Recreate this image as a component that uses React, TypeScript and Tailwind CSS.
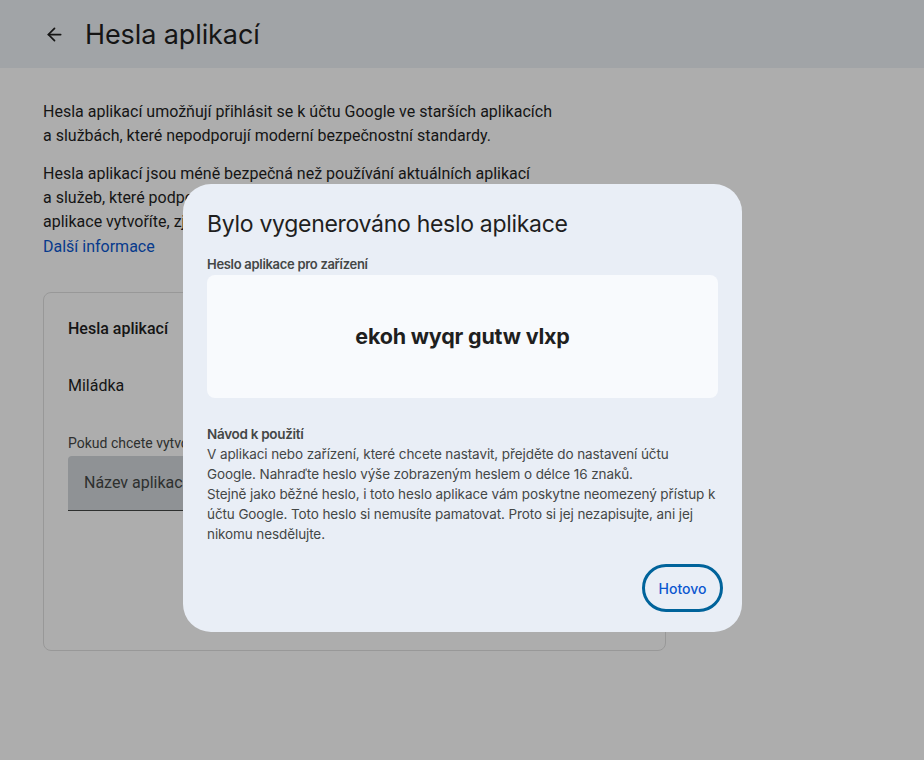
import { ArrowLeft } from "lucide-react";

const sans = { fontFamily: "Roboto, 'Liberation Sans', sans-serif" };
const display = { fontFamily: "Inter, 'Open Sans', sans-serif" };

function Page() {
  return (
    <div className="min-h-[760px] bg-white text-[#1f1f1f]" style={sans}>
      <header className="flex h-[68px] items-center gap-[20px] bg-[#eef2f6] pl-[44px]">
        <ArrowLeft className="h-[21px] w-[21px]" strokeWidth={2} />
        <h1 className="text-[27px] leading-none tracking-[-0.1px]" style={display}>
          Hesla aplikací
        </h1>
      </header>

      <main className="w-[666px] pl-[43px] pt-[32px]">
        <p className="w-[520px] text-[16px] leading-[24px]">
          Hesla aplikací umožňují přihlásit se k účtu Google ve starších aplikacích a službách, které
          nepodporují moderní bezpečnostní standardy.
        </p>
        <p className="mt-[14px] w-[496px] text-[16px] leading-[24px]">
          Hesla aplikací jsou méně bezpečná než používání aktuálních aplikací a služeb, které podporují
          moderní bezpečnostní standardy. Než hesla aplikace vytvoříte, zjistěte, zda je aplikace
          nepotřebuje.
        </p>
        <a className="block text-[16px] leading-[25px] text-[#0b57d0]">Další informace</a>

        <section className="mt-[33px] h-[359px] rounded-[8px] border border-[#e1e1e1] px-[24px] pt-[24px]">
          <h2 className="text-[16px] font-medium leading-[24px]">Hesla aplikací</h2>
          <p className="mt-[33px] text-[16px] leading-[24px]">Miládka</p>
          <p className="mt-[35px] whitespace-nowrap text-[14px] leading-[20px] text-[#444746]">
            Pokud chcete vytvořit nové heslo aplikace, zadejte níže její název.
          </p>
          <div className="mt-[3px] flex h-[55px] w-[400px] items-center rounded-t-[4px] border-b border-[#444746] bg-[#d3d7dc] px-[16px] text-[16px] text-[#444746]">
            Název aplikace
          </div>
        </section>
      </main>
    </div>
  );
}

function Dialog() {
  return (
    <div
      className="absolute left-[183px] top-[184px] w-[559px] rounded-[28px] bg-[#e9eef6] px-[24px] pb-[20px] pt-[25px] text-[#1f1f1f]"
      style={display}
    >
      <h2 className="text-[23px] font-normal leading-[30px] tracking-[-0.3px]">
        Bylo vygenerováno heslo aplikace
      </h2>
      <p className="mt-[16px] text-[13px] font-semibold leading-[18px] tracking-[-0.3px] text-[#444746]">
        Heslo aplikace pro zařízení
      </p>
      <div className="mt-[2px] flex h-[123px] items-center justify-center rounded-[8px] bg-[#f8fafd]">
        <span className="text-[21.5px] font-bold tracking-[-0.2px] text-[#1f1f1f]">
          ekoh wyqr gutw vlxp
        </span>
      </div>
      <div className="mt-[26px] text-[13.5px] leading-[20px] text-[#444746]">
        <p className="font-semibold tracking-[-0.3px]">Návod k použití</p>
        <p className="tracking-[-0.1px]">
          V aplikaci nebo zařízení, které chcete nastavit, přejděte do nastavení účtu Google. Nahraďte
          heslo výše zobrazeným heslem o délce 16 znaků.
          <br />
          Stejně jako běžné heslo, i toto heslo aplikace vám poskytne neomezený přístup k účtu Google.
          Toto heslo si nemusíte pamatovat. Proto si jej nezapisujte, ani jej nikomu nesdělujte.
        </p>
      </div>
      <div className="mt-[20px] flex justify-end">
        <button className="-mr-[5px] flex h-[48px] w-[81px] items-center justify-center rounded-full border-[3px] border-[#00639b] text-[14px] font-medium text-[#0b57d0]">
          Hotovo
        </button>
      </div>
    </div>
  );
}

export default function App() {
  return (
    <div className="relative h-[760px] w-[924px] overflow-hidden">
      <Page />
      <div className="absolute inset-0 bg-black/[0.32]" />
      <Dialog />
    </div>
  );
}
